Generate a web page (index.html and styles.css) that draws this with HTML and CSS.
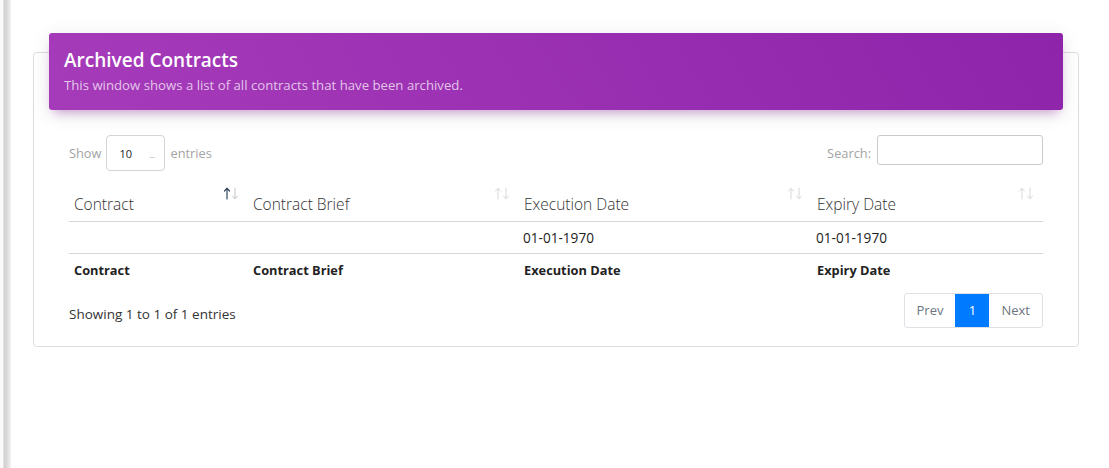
FILE: index.html
```html
<!DOCTYPE html>
<html lang="en">
<head>
<meta charset="utf-8">
<title>Archived Contracts</title>
<link rel="stylesheet" href="styles.css">
</head>
<body>
<div class="layout">
  <div class="edge"></div>
  <main class="main">
    <section class="card">
      <header class="card-header">
        <h4 class="card-title">Archived Contracts</h4>
        <p class="card-category">This window shows a list of all contracts that have been archived.</p>
      </header>
      <div class="card-body">
        <div class="controls">
          <label class="length">Show <span class="select"><span class="sel-val">10</span><span class="sel-arrow">_</span></span> entries</label>
          <label class="search"><span class="search-label">Search:</span> <span class="search-input"></span></label>
        </div>
        <table class="table">
          <colgroup>
            <col class="c1"><col class="c2"><col class="c3"><col class="c4">
          </colgroup>
          <thead>
            <tr>
              <th><div class="th-in"><span class="th-label">Contract</span><svg class="sort active" width="16" height="13" viewBox="0 0 16 13"><path class="up" d="M4 12V1.5M1.5 4L4 1.2 6.5 4"/><path class="down" d="M12 1v10.5M9.5 9L12 11.8 14.5 9"/></svg></div></th>
              <th><div class="th-in"><span class="th-label">Contract Brief</span><svg class="sort" width="16" height="13" viewBox="0 0 16 13"><path class="up" d="M4 12V1.5M1.5 4L4 1.2 6.5 4"/><path class="down" d="M12 1v10.5M9.5 9L12 11.8 14.5 9"/></svg></div></th>
              <th><div class="th-in"><span class="th-label">Execution Date</span><svg class="sort" width="16" height="13" viewBox="0 0 16 13"><path class="up" d="M4 12V1.5M1.5 4L4 1.2 6.5 4"/><path class="down" d="M12 1v10.5M9.5 9L12 11.8 14.5 9"/></svg></div></th>
              <th><div class="th-in"><span class="th-label">Expiry Date</span><svg class="sort" width="16" height="13" viewBox="0 0 16 13"><path class="up" d="M4 12V1.5M1.5 4L4 1.2 6.5 4"/><path class="down" d="M12 1v10.5M9.5 9L12 11.8 14.5 9"/></svg></div></th>
            </tr>
          </thead>
          <tbody>
            <tr><td></td><td></td><td>01-01-1970</td><td>01-01-1970</td></tr>
          </tbody>
          <tfoot>
            <tr><th>Contract</th><th>Contract Brief</th><th>Execution Date</th><th>Expiry Date</th></tr>
          </tfoot>
        </table>
        <div class="bottom">
          <div class="info">Showing 1 to 1 of 1 entries</div>
          <nav class="pagination">
            <span class="page">Prev</span>
            <span class="page active">1</span>
            <span class="page">Next</span>
          </nav>
        </div>
      </div>
    </section>
  </main>
</div>
</body>
</html>
```
FILE: styles.css
```css
* { box-sizing: border-box; }
html, body { margin: 0; padding: 0; background: #fff; }
body {
  font-family: "Open Sans", "Noto Sans", "Liberation Sans", sans-serif;
  color: #212529;
  font-size: 13px;
}
.layout { display: flex; min-height: 468px; }
.edge {
  width: 11px;
  flex: none;
  background: linear-gradient(to right, #fafafa 0, #fafafa 3px, #cfcfcf 4px, #dadada 7px, #f4f4f4 11px);
}
.main { flex: 1; padding: 52px 30px 0 22px; }
.card {
  border: 1px solid #e0dde2;
  border-radius: 4px;
  background: #fff;
}
.card-header {
  margin: -20px 15px 0;
  padding: 14px 15px 15px;
  border-radius: 3px;
  background: linear-gradient(60deg, #a63bba, #8e24aa);
  box-shadow: 0 4px 20px 0 rgba(0,0,0,.10), 0 7px 10px -5px rgba(156,39,176,.4);
  color: #fff;
}
.card-title {
  margin: 0;
  font-size: 19px;
  font-weight: 600;
  line-height: 27px;
}
.card-category {
  margin: 2px 0 0;
  font-size: 13.2px;
  line-height: 19px;
  color: rgba(255,255,255,.72);
}
.card-body { padding: 25px 35px 18px; }
.controls {
  display: flex;
  justify-content: space-between;
  align-items: flex-start;
  color: #a3a3a3;
  font-size: 12.8px;
}
.length, .search { display: flex; align-items: center; gap: 5px; }
.search { height: 29px; gap: 6px; }
.search-label { padding-top: 6px; }
.select {
  display: inline-flex;
  align-items: center;
  justify-content: space-between;
  width: 59px;
  height: 36px;
  padding: 0 10px 0 12px;
  border: 1px solid #d3d3d8;
  border-radius: 4px;
  color: #222;
  font-size: 11px;
}
.sel-arrow { color: #c0c0c0; margin-top: -4px; }
.search-input {
  display: block;
  width: 166px;
  height: 30px;
  border: 1px solid #c9c9cf;
  border-radius: 3px;
}
.table {
  width: 100%;
  border-collapse: collapse;
  table-layout: fixed;
  margin-top: 9px;
}
.c1 { width: 179px; }
.c2 { width: 271px; }
.c3 { width: 293px; }
.c4 { width: 231px; }
thead th {
  padding: 5px 9px 6px 5px;
  text-align: left;
  font-weight: 300;
  font-size: 15.5px;
  color: #333;
  border-bottom: 1px solid #d6d6d6;
}
.th-in { display: flex; justify-content: space-between; align-items: flex-start; }
.th-label { padding-top: 9px; line-height: 21px; }
.sort { flex: none; margin-top: 2px; fill: none; stroke-width: 1; stroke-linecap: round; stroke-linejoin: round; }
.sort path { stroke: #d8d8de; }
.sort.active .up { stroke: #34465f; stroke-width: 1.2; }
.sort.active .down { stroke: #c4c4ca; }
tbody td {
  height: 32px;
  padding: 0 4px;
  border-bottom: 1px solid #d6d6d6;
  font-size: 13.6px;
  color: #222;
}
tfoot th {
  height: 33px;
  padding: 0 5px;
  text-align: left;
  font-size: 12.8px;
  font-weight: 700;
  color: #222;
}
.bottom {
  display: flex;
  justify-content: space-between;
  align-items: center;
  margin-top: 6px;
}
.info { font-size: 13.5px; color: #333; padding-top: 7px; }
.pagination {
  display: flex;
  border: 1px solid #dee2e6;
  border-radius: 3px;
  overflow: hidden;
}
.page {
  display: flex;
  align-items: center;
  justify-content: center;
  height: 33px;
  padding: 0 12px;
  font-size: 13px;
  color: #6c757d;
}
.page.active { background: #007bff; color: #fff; width: 34px; padding: 0; }
```
